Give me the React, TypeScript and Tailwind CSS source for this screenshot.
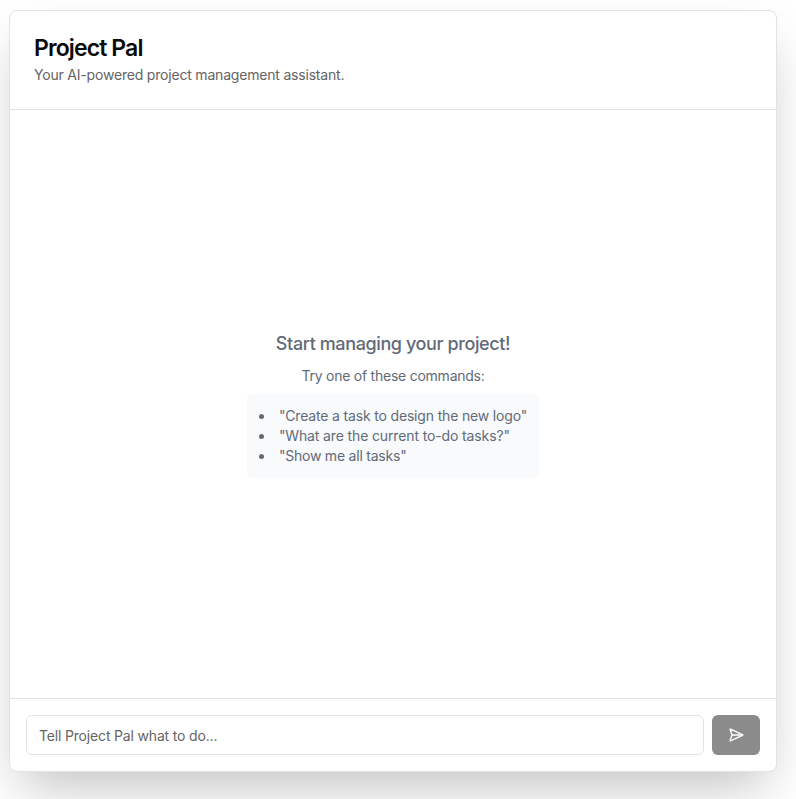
import { SendHorizontal } from "lucide-react";

const commands = [
  { text: '"Create a task to design the new logo"', tracking: "tracking-[-0.165px]" },
  { text: '"What are the current to-do tasks?"', tracking: "tracking-[-0.13px]" },
  { text: '"Show me all tasks"', tracking: "tracking-[-0.22px]" },
];

export default function App() {
  return (
    <div className="h-[799px] w-full overflow-hidden bg-white pl-[9px] pt-[10px] font-['Inter',sans-serif]">
      <main className="flex h-[762px] w-[768px] flex-col rounded-lg border border-[#e2e2e2] bg-white shadow-2xl">
        <header className="flex flex-col gap-[5px] border-b border-[#e2e2e2] px-6 pt-[25px] pb-6">
          <h1 className="text-[23px] leading-6 font-semibold tracking-[-0.88px] text-[#0a0a0a]">Project Pal</h1>
          <p className="text-sm tracking-[-0.195px] text-[#646464]">Your AI-powered project management assistant.</p>
        </header>
        <section className="flex flex-1 flex-col items-center justify-center text-[#626a78]">
          <h2 className="text-lg font-medium tracking-[-0.39px]">Start managing your project!</h2>
          <p className="mt-2 text-sm tracking-[-0.24px]">Try one of these commands:</p>
          <ul className="mt-2 list-inside list-disc rounded-md bg-[#f8fafc] p-3 text-left text-sm">
            {commands.map((c) => (
              <li key={c.text} className={c.tracking}>
                {c.text}
              </li>
            ))}
          </ul>
        </section>
        <form className="flex gap-2 border-t border-[#e2e2e2] p-4" onSubmit={(e) => e.preventDefault()}>
          <input
            className="h-10 min-w-0 flex-1 rounded-md border border-[#e2e2e2] bg-white px-3 text-sm tracking-[-0.17px] placeholder:text-[#646464]"
            placeholder="Tell Project Pal what to do..."
          />
          <button
            type="submit"
            aria-label="Send"
            className="flex h-10 w-12 items-center justify-center rounded-md bg-[#8b8b8b] text-white"
          >
            <SendHorizontal className="h-4 w-4" />
          </button>
        </form>
      </main>
    </div>
  );
}
